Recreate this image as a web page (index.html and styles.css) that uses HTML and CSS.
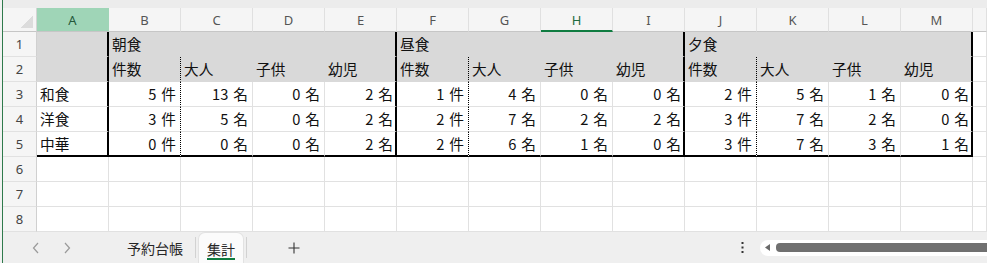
FILE: index.html
```html
<!DOCTYPE html>
<html lang="ja">
<head>
<meta charset="utf-8">
<title>集計</title>
<link rel="stylesheet" href="styles.css">
</head>
<body>
<div class="app">
  <div class="topstrip"></div>
  <div class="sheet">
    <div class="corner"></div>
    <div class="ch sel">A</div>
    <div class="ch">B</div>
    <div class="ch">C</div>
    <div class="ch">D</div>
    <div class="ch">E</div>
    <div class="ch">F</div>
    <div class="ch">G</div>
    <div class="ch act">H</div>
    <div class="ch">I</div>
    <div class="ch">J</div>
    <div class="ch">K</div>
    <div class="ch">L</div>
    <div class="ch">M</div>
    <div class="ch"></div>

    <div class="rh">1</div>
    <div class="c g tr"></div>
    <div class="c g">朝食</div>
    <div class="c g"></div>
    <div class="c g"></div>
    <div class="c g tr"></div>
    <div class="c g">昼食</div>
    <div class="c g"></div>
    <div class="c g"></div>
    <div class="c g tr"></div>
    <div class="c g">夕食</div>
    <div class="c g"></div>
    <div class="c g"></div>
    <div class="c g tr"></div>
    <div class="c"></div>

    <div class="rh">2</div>
    <div class="c g tr"></div>
    <div class="c g dt">件数</div>
    <div class="c g">大人</div>
    <div class="c g">子供</div>
    <div class="c g tr">幼児</div>
    <div class="c g dt">件数</div>
    <div class="c g">大人</div>
    <div class="c g">子供</div>
    <div class="c g tr">幼児</div>
    <div class="c g dt">件数</div>
    <div class="c g">大人</div>
    <div class="c g">子供</div>
    <div class="c g tr">幼児</div>
    <div class="c"></div>

    <div class="rh">3</div>
    <div class="c tr">和食</div>
    <div class="c n dt">5<span class="u">件</span></div>
    <div class="c n">13<span class="u">名</span></div>
    <div class="c n">0<span class="u">名</span></div>
    <div class="c n tr">2<span class="u">名</span></div>
    <div class="c n dt">1<span class="u">件</span></div>
    <div class="c n">4<span class="u">名</span></div>
    <div class="c n">0<span class="u">名</span></div>
    <div class="c n tr">0<span class="u">名</span></div>
    <div class="c n dt">2<span class="u">件</span></div>
    <div class="c n">5<span class="u">名</span></div>
    <div class="c n">1<span class="u">名</span></div>
    <div class="c n tr">0<span class="u">名</span></div>
    <div class="c"></div>

    <div class="rh">4</div>
    <div class="c tr">洋食</div>
    <div class="c n dt">3<span class="u">件</span></div>
    <div class="c n">5<span class="u">名</span></div>
    <div class="c n">0<span class="u">名</span></div>
    <div class="c n tr">2<span class="u">名</span></div>
    <div class="c n dt">2<span class="u">件</span></div>
    <div class="c n">7<span class="u">名</span></div>
    <div class="c n">2<span class="u">名</span></div>
    <div class="c n tr">2<span class="u">名</span></div>
    <div class="c n dt">3<span class="u">件</span></div>
    <div class="c n">7<span class="u">名</span></div>
    <div class="c n">2<span class="u">名</span></div>
    <div class="c n tr">0<span class="u">名</span></div>
    <div class="c"></div>

    <div class="rh">5</div>
    <div class="c tr bb">中華</div>
    <div class="c n dt bb">0<span class="u">件</span></div>
    <div class="c n bb">0<span class="u">名</span></div>
    <div class="c n bb">0<span class="u">名</span></div>
    <div class="c n tr bb">2<span class="u">名</span></div>
    <div class="c n dt bb">2<span class="u">件</span></div>
    <div class="c n bb">6<span class="u">名</span></div>
    <div class="c n bb">1<span class="u">名</span></div>
    <div class="c n tr bb">0<span class="u">名</span></div>
    <div class="c n dt bb">3<span class="u">件</span></div>
    <div class="c n bb">7<span class="u">名</span></div>
    <div class="c n bb">3<span class="u">名</span></div>
    <div class="c n tr bb">1<span class="u">名</span></div>
    <div class="c"></div>

    <div class="rh">6</div>
    <div class="c"></div><div class="c"></div><div class="c"></div><div class="c"></div><div class="c"></div><div class="c"></div><div class="c"></div><div class="c"></div><div class="c"></div><div class="c"></div><div class="c"></div><div class="c"></div><div class="c"></div><div class="c"></div>

    <div class="rh">7</div>
    <div class="c"></div><div class="c"></div><div class="c"></div><div class="c"></div><div class="c"></div><div class="c"></div><div class="c"></div><div class="c"></div><div class="c"></div><div class="c"></div><div class="c"></div><div class="c"></div><div class="c"></div><div class="c"></div>

    <div class="rh">8</div>
    <div class="c"></div><div class="c"></div><div class="c"></div><div class="c"></div><div class="c"></div><div class="c"></div><div class="c"></div><div class="c"></div><div class="c"></div><div class="c"></div><div class="c"></div><div class="c"></div><div class="c"></div><div class="c"></div>
  </div>

  <div class="tabbar">
    <div class="nav">
      <svg class="chev" width="8" height="12" viewBox="0 0 8 12"><path d="M6 1 L1.5 6 L6 11" fill="none" stroke="#9a9a9a" stroke-width="1.2"/></svg>
      <svg class="chev" width="8" height="12" viewBox="0 0 8 12"><path d="M2 1 L6.5 6 L2 11" fill="none" stroke="#9a9a9a" stroke-width="1.2"/></svg>
    </div>
    <div class="tab">予約台帳</div>
    <div class="sep"></div>
    <div class="tab active"><span class="ul">集計</span></div>
    <div class="sep"></div>
    <div class="plus">
      <svg width="12" height="12" viewBox="0 0 12 12"><path d="M6 0.5 V11.5 M0.5 6 H11.5" stroke="#333" stroke-width="1.1"/></svg>
    </div>
    <div class="spacer"></div>
    <div class="more">
      <svg width="3" height="11" viewBox="0 0 3 11"><rect x="0.5" y="0" width="2" height="2" fill="#333"/><rect x="0.5" y="4.5" width="2" height="2" fill="#333"/><rect x="0.5" y="9" width="2" height="2" fill="#333"/></svg>
    </div>
    <div class="track">
      <svg class="tri" width="5" height="7" viewBox="0 0 5 7"><path d="M5 0 L0 3.5 L5 7 Z" fill="#6a6a6a"/></svg>
      <div class="thumb"></div>
    </div>
  </div>
</div>
</body>
</html>
```

FILE: styles.css
```css
* { box-sizing: border-box; margin: 0; padding: 0; }
html, body { height: 100%; }
body {
  background: #f2f2f2;
  font-family: "Noto Sans CJK JP", "Noto Sans", sans-serif;
  overflow: hidden;
}
.app {
  margin-left: 2px;
  border-left: 1px solid #2f7a4c;
  height: 263px;
  display: flex;
  flex-direction: column;
  background: #fff;
}
.topstrip {
  flex: none;
  height: 8px;
  background: #ececec;
}
.sheet {
  flex: none;
  display: grid;
  grid-template-columns: 34px repeat(13, 72px) 1fr;
  grid-template-rows: 24px repeat(8, 25px);
}
.corner {
  background: linear-gradient(to bottom right, transparent 50%, #dcdcdc 50%) no-repeat right 3px bottom 3px / 13px 13px, #f5f5f5;
  border-right: 1px solid #d4d4d4;
  border-bottom: 1px solid #c6c6c6;
}
.ch {
  background: #f5f5f5;
  border-right: 1px solid #e0e0e0;
  border-bottom: 1px solid #c6c6c6;
  font-family: "Noto Sans", "Open Sans", sans-serif;
  font-size: 13px;
  color: #555;
  display: flex;
  align-items: center;
  justify-content: center;
}
.ch.sel {
  background: #9fd5b7;
  color: #24593a;
  border-right-color: #9fd5b7;
}
.ch.act {
  border-bottom: 2px solid #107c41;
  color: #1e6b40;
  padding-top: 1px;
}
.rh {
  background: #f5f5f5;
  border-right: 1px solid #d0d0d0;
  border-bottom: 1px solid #e1e1e1;
  font-family: "Noto Sans", "Open Sans", sans-serif;
  font-size: 13px;
  color: #444;
  display: flex;
  align-items: center;
  justify-content: center;
}
.c {
  border-right: 1px solid #e1e1e1;
  border-bottom: 1px solid #e1e1e1;
  font-size: 14.67px;
  line-height: 18px;
  color: #111;
  display: flex;
  align-items: center;
  padding: 0 3px;
  white-space: nowrap;
}
.u { margin-left: 5px; }
.g {
  background: #d9d9d9;
  border-color: #d9d9d9;
}
.n {
  justify-content: flex-end;
  padding-right: 4px;
}
.dt { border-right: 1px dotted #000; }
.tr { border-right: 2px solid #000; padding-right: 2px; }
.bb { border-bottom: 2px solid #000; }

.tabbar {
  flex: 1;
  background: #efefef;
  display: flex;
  align-items: center;
}
.nav {
  width: 112px;
  display: flex;
  align-items: center;
  padding-left: 29px;
}
.chev { margin-right: 23px; }
.tab {
  padding: 0 12px;
  font-size: 14px;
  color: #262626;
  line-height: 20px;
}
.tab.active {
  align-self: stretch;
  margin: 1px 3px 0;
  padding: 0 8px;
  background: #fbfbfb;
  border-radius: 6px 6px 0 0;
  box-shadow: 0 0 0 1px #e2e2e2;
  display: flex;
  align-items: center;
}
.ul {
  display: block;
  border-bottom: 2px solid #107c41;
  line-height: 18px;
  padding-top: 2px;
  margin-top: 2px;
}
.sep {
  width: 1px;
  height: 21px;
  background: #d2d2d2;
}
.plus {
  margin-left: 41px;
  display: flex;
}
.spacer { flex: 1; }
.more {
  display: flex;
  margin-right: 16px;
}
.track {
  width: 227px;
  height: 16px;
  background: #fff;
  border-radius: 8px 0 0 8px;
  display: flex;
  align-items: center;
  padding-left: 5px;
  flex: none;
}
.tri { margin-right: 6px; flex: none; }
.thumb {
  flex: 1;
  height: 9px;
  background: #707070;
  border-radius: 4px 0 0 4px;
}
```
